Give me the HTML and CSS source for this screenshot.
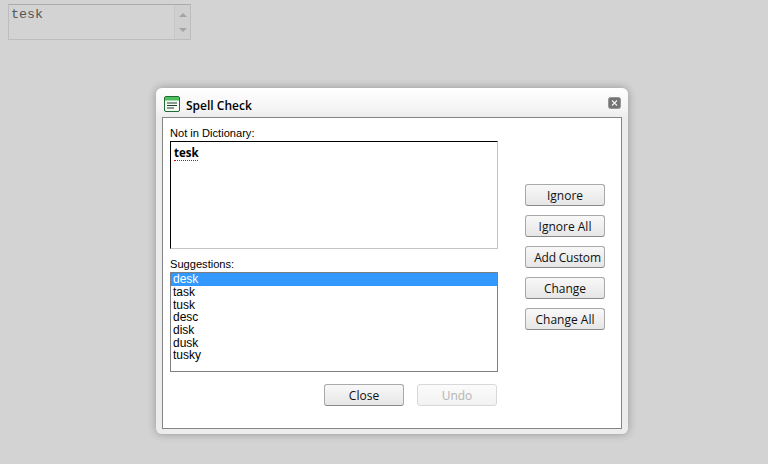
FILE: index.html
```html
<!DOCTYPE html>
<html>
<head>
<meta charset="utf-8">
<title>Spell Check</title>
<link rel="stylesheet" href="styles.css">
</head>
<body>
<div class="source">
  <div class="source-text">tesk</div>
  <div class="scrollbar">
    <svg width="10" height="6" viewBox="0 0 10 6"><path d="M5 1 9 5H1Z" fill="#a4a4a4"/></svg>
    <svg width="10" height="6" viewBox="0 0 10 6"><path d="M1 1H9L5 5Z" fill="#a4a4a4"/></svg>
  </div>
</div>
<div class="dialog">
  <div class="titlebar">
    <svg class="app-icon" width="16" height="16" viewBox="0 0 16 16">
      <rect x="0.5" y="0.5" width="15" height="15" rx="1.5" fill="#f4fbf4" stroke="#1f6b33"/>
      <rect x="1" y="1" width="14" height="3.5" fill="#4fc05f"/>
      <path d="M3 7H13M3 9.5H13M3 12H10" stroke="#1f3f2a" stroke-width="1"/>
    </svg>
    <span class="title">Spell Check</span>
    <span class="close-x">
      <svg width="13" height="12" viewBox="0 0 13 12">
        <rect x="0.5" y="0.5" width="12" height="11" rx="2" fill="#737373" stroke="#969696"/>
        <path d="M4 3.5 9 8.5M9 3.5 4 8.5" stroke="#f4f4f4" stroke-width="1.1"/>
      </svg>
    </span>
  </div>
  <div class="frame">
    <div class="main">
      <label class="label label-first">Not in Dictionary:</label>
      <div class="word-box"><span class="bad-word">tesk</span></div>
      <label class="label label-second">Suggestions:</label>
      <ul class="list">
        <li class="selected">desk</li>
        <li>task</li>
        <li>tusk</li>
        <li>desc</li>
        <li>disk</li>
        <li>dusk</li>
        <li>tusky</li>
      </ul>
      <div class="bottom-actions">
        <button class="btn">Close</button>
        <button class="btn btn-disabled">Undo</button>
      </div>
    </div>
    <div class="side-actions">
      <button class="btn">Ignore</button>
      <button class="btn">Ignore All</button>
      <button class="btn btn-wide-text">Add Custom</button>
      <button class="btn">Change</button>
      <button class="btn">Change All</button>
    </div>
  </div>
</div>
</body>
</html>
```
FILE: styles.css
```css
html, body {
  margin: 0;
  height: 100%;
  overflow: hidden;
}
body {
  background: #d3d3d3;
  font-family: "Liberation Sans", Arial, sans-serif;
  padding: 4px 0 0 8px;
  box-sizing: border-box;
}
.source {
  width: 183px;
  height: 36px;
  box-sizing: border-box;
  border: 1px solid #bdbdbd;
  border-top-color: #ababab;
  display: flex;
}
.source-text {
  flex: 1;
  font: 13.33px/13px "Liberation Mono", "Courier New", monospace;
  color: #555;
  padding: 3px 0 0 2px;
}
.scrollbar {
  width: 16px;
  background: #cfcfcf;
  border-left: 1px solid #c8c8c8;
  display: flex;
  flex-direction: column;
  align-items: center;
  justify-content: space-between;
  padding: 7px 0 6px;
  box-sizing: border-box;
}
.dialog {
  position: absolute;
  left: 156px;
  top: 88px;
  width: 472px;
  height: 346px;
  box-sizing: border-box;
  padding: 0 6px 5px;
  border-radius: 6px;
  background: linear-gradient(#fff 0, #f4f4f4 22px, #ececec 29px);
  box-shadow: 0 0 9px rgba(0, 0, 0, 0.3);
  display: flex;
  flex-direction: column;
}
.titlebar {
  height: 29px;
  flex: none;
  display: flex;
  align-items: center;
  padding: 2px 0 0 2px;
  box-sizing: border-box;
}
.app-icon { flex: none; }
.title {
  margin: 3px 0 0 6px;
  font: 600 12px "Open Sans", sans-serif;
  color: #000;
  flex: 1;
}
.close-x {
  display: flex;
  margin-right: 1px;
  margin-top: -2px;
}
.frame {
  flex: 1;
  border: 1px solid #858585;
  background: #fff;
  display: flex;
  box-sizing: border-box;
  padding: 0 0 0 7px;
}
.main {
  width: 328px;
  display: flex;
  flex-direction: column;
}
.label {
  font-size: 11.1px;
  line-height: 14px;
  color: #000;
}
.label-first { margin-top: 8px; }
.label-second { margin-top: 8px; }
.word-box {
  height: 108px;
  margin-top: 1px;
  box-sizing: border-box;
  border: 1px solid #c4c4c4;
  border-top-color: #000;
  border-left-color: #000;
  padding: 4px 3px;
}
.bad-word {
  display: block;
  width: 24px;
  font: bold 11.5px/13px "Open Sans", sans-serif;
  white-space: nowrap;
  color: #000;
  padding-bottom: 1px;
  border-bottom: 1px dotted #f00000;
}
.list {
  list-style: none;
  margin: 1px 0 0;
  padding: 0;
  height: 100px;
  box-sizing: border-box;
  border: 1px solid #7f7f7f;
  font-size: 12px;
  line-height: 12.7px;
  color: #000;
}
.list li {
  padding-left: 2px;
  height: 12.7px;
}
.list .selected {
  height: 13px;
  color: #fff;
  background-color: #3399ff;
  background-image:
    repeating-linear-gradient(90deg, #b5752c 0 1px, transparent 1px 2px),
    repeating-linear-gradient(90deg, #b5752c 0 1px, transparent 1px 2px),
    repeating-linear-gradient(0deg, #b5752c 0 1px, transparent 1px 2px);
  background-size: 100% 1px, 100% 1px, 1px 100%;
  background-position: 0 0, 0 100%, 0 0;
  background-repeat: no-repeat;
}
.bottom-actions {
  display: flex;
  justify-content: flex-end;
  gap: 13px;
  margin-top: 12px;
  padding-right: 1px;
}
.side-actions {
  display: flex;
  flex-direction: column;
  gap: 9px;
  margin-left: 27px;
  padding-top: 66px;
}
.btn {
  width: 80px;
  height: 22px;
  padding: 1px 0 0;
  box-sizing: border-box;
  border: 1px solid #a9a9a9;
  border-bottom-color: #8a8a8a;
  border-radius: 3px;
  background: linear-gradient(#f8f8f8, #e6e6e6);
  font: 12px "Open Sans", sans-serif;
  color: #111;
}
.btn-wide-text {
  padding-left: 5px;
  letter-spacing: -0.2px;
}
.btn-disabled {
  border-color: #d8d8d8;
  background: linear-gradient(#fbfbfb, #f2f2f2);
  color: #b4b4b4;
}
```
